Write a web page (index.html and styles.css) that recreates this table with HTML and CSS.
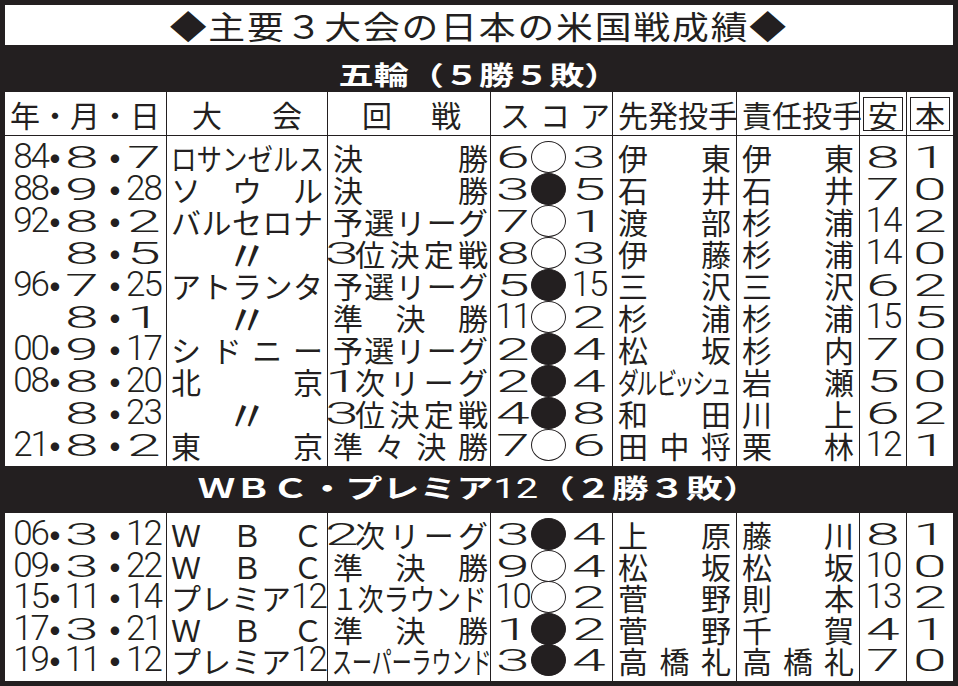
FILE: index.html
```html
<!DOCTYPE html>
<html lang="ja">
<head>
<meta charset="utf-8">
<title>主要３大会の日本の米国戦成績</title>
<link rel="stylesheet" href="styles.css">
</head>
<body>
<div class="sheet">
  <div class="title"><span class="title-text">◆主要３大会の日本の米国戦成績◆</span></div>
  <div class="band band1"><span class="band-text">五輪（５勝５敗）</span></div>
  <div class="table t1">
    <div class="row head">
      <div class="c hdate"><span>年</span><span class="hdt">・</span><span>月</span><span class="hdt">・</span><span>日</span></div>
      <div class="c sp h-tour"><span>大</span><span>会</span></div>
      <div class="c sp h-round"><span>回</span><span>戦</span></div>
      <div class="c sp h-score"><span>ス</span><span>コ</span><span>ア</span></div>
      <div class="c sp p"><span>先</span><span>発</span><span>投</span><span>手</span></div>
      <div class="c sp p"><span>責</span><span>任</span><span>投</span><span>手</span></div>
      <div class="c num"><span class="box">安</span></div>
      <div class="c num"><span class="box">本</span></div>
    </div>
    <div class="body">
      <div class="row">
        <div class="c date"><span class="yr n">84</span><span class="dt"><span class="dot">・</span></span><span class="mo"><span class="w">8</span></span><span class="dt"><span class="dot">・</span></span><span class="dy"><span class="w">7</span></span></div>
        <div class="c t"><span class="sq sq-la">ロサンゼルス</span></div>
        <div class="c sp r"><span>決</span><span>勝</span></div>
        <div class="c score"><span class="sl"><span class="w">6</span></span><span class="ball" role="img" aria-label="勝"></span><span class="sr"><span class="w">3</span></span></div>
        <div class="c sp p"><span>伊</span><span>東</span></div>
        <div class="c sp p"><span>伊</span><span>東</span></div>
        <div class="c num"><span class="w">8</span></div>
        <div class="c num"><span class="w">1</span></div>
      </div>
      <div class="row">
        <div class="c date"><span class="yr n">88</span><span class="dt"><span class="dot">・</span></span><span class="mo"><span class="w">9</span></span><span class="dt"><span class="dot">・</span></span><span class="dy"><span class="n">28</span></span></div>
        <div class="c sp t"><span>ソ</span><span>ウ</span><span>ル</span></div>
        <div class="c sp r"><span>決</span><span>勝</span></div>
        <div class="c score"><span class="sl"><span class="w">3</span></span><span class="ball lose" role="img" aria-label="敗"></span><span class="sr"><span class="w">5</span></span></div>
        <div class="c sp p"><span>石</span><span>井</span></div>
        <div class="c sp p"><span>石</span><span>井</span></div>
        <div class="c num"><span class="w">7</span></div>
        <div class="c num"><span class="w">0</span></div>
      </div>
      <div class="row">
        <div class="c date"><span class="yr n">92</span><span class="dt"><span class="dot">・</span></span><span class="mo"><span class="w">8</span></span><span class="dt"><span class="dot">・</span></span><span class="dy"><span class="w">2</span></span></div>
        <div class="c sp t"><span>バ</span><span>ル</span><span>セ</span><span>ロ</span><span>ナ</span></div>
        <div class="c sp r"><span>予</span><span>選</span><span>リ</span><span>ー</span><span>グ</span></div>
        <div class="c score"><span class="sl"><span class="w">7</span></span><span class="ball" role="img" aria-label="勝"></span><span class="sr"><span class="w">1</span></span></div>
        <div class="c sp p"><span>渡</span><span>部</span></div>
        <div class="c sp p"><span>杉</span><span>浦</span></div>
        <div class="c num"><span class="n">14</span></div>
        <div class="c num"><span class="w">2</span></div>
      </div>
      <div class="row">
        <div class="c date"><span class="yr"></span><span class="dt"></span><span class="mo"><span class="w">8</span></span><span class="dt"><span class="dot">・</span></span><span class="dy"><span class="w">5</span></span></div>
        <div class="c ditto-cell"><span class="ditto">〃</span></div>
        <div class="c sp r"><span class="w">3</span><span>位</span><span>決</span><span>定</span><span>戦</span></div>
        <div class="c score"><span class="sl"><span class="w">8</span></span><span class="ball" role="img" aria-label="勝"></span><span class="sr"><span class="w">3</span></span></div>
        <div class="c sp p"><span>伊</span><span>藤</span></div>
        <div class="c sp p"><span>杉</span><span>浦</span></div>
        <div class="c num"><span class="n">14</span></div>
        <div class="c num"><span class="w">0</span></div>
      </div>
      <div class="row">
        <div class="c date"><span class="yr n">96</span><span class="dt"><span class="dot">・</span></span><span class="mo"><span class="w">7</span></span><span class="dt"><span class="dot">・</span></span><span class="dy"><span class="n">25</span></span></div>
        <div class="c sp t"><span>ア</span><span>ト</span><span>ラ</span><span>ン</span><span>タ</span></div>
        <div class="c sp r"><span>予</span><span>選</span><span>リ</span><span>ー</span><span>グ</span></div>
        <div class="c score"><span class="sl"><span class="w">5</span></span><span class="ball lose" role="img" aria-label="敗"></span><span class="sr"><span class="n">15</span></span></div>
        <div class="c sp p"><span>三</span><span>沢</span></div>
        <div class="c sp p"><span>三</span><span>沢</span></div>
        <div class="c num"><span class="w">6</span></div>
        <div class="c num"><span class="w">2</span></div>
      </div>
      <div class="row">
        <div class="c date"><span class="yr"></span><span class="dt"></span><span class="mo"><span class="w">8</span></span><span class="dt"><span class="dot">・</span></span><span class="dy"><span class="w">1</span></span></div>
        <div class="c ditto-cell"><span class="ditto">〃</span></div>
        <div class="c sp r r3"><span>準</span><span>決</span><span>勝</span></div>
        <div class="c score"><span class="sl"><span class="n">11</span></span><span class="ball" role="img" aria-label="勝"></span><span class="sr"><span class="w">2</span></span></div>
        <div class="c sp p"><span>杉</span><span>浦</span></div>
        <div class="c sp p"><span>杉</span><span>浦</span></div>
        <div class="c num"><span class="n">15</span></div>
        <div class="c num"><span class="w">5</span></div>
      </div>
      <div class="row">
        <div class="c date"><span class="yr n">00</span><span class="dt"><span class="dot">・</span></span><span class="mo"><span class="w">9</span></span><span class="dt"><span class="dot">・</span></span><span class="dy"><span class="n">17</span></span></div>
        <div class="c sp t"><span>シ</span><span>ド</span><span>ニ</span><span>ー</span></div>
        <div class="c sp r"><span>予</span><span>選</span><span>リ</span><span>ー</span><span>グ</span></div>
        <div class="c score"><span class="sl"><span class="w">2</span></span><span class="ball lose" role="img" aria-label="敗"></span><span class="sr"><span class="w">4</span></span></div>
        <div class="c sp p"><span>松</span><span>坂</span></div>
        <div class="c sp p"><span>杉</span><span>内</span></div>
        <div class="c num"><span class="w">7</span></div>
        <div class="c num"><span class="w">0</span></div>
      </div>
      <div class="row">
        <div class="c date"><span class="yr n">08</span><span class="dt"><span class="dot">・</span></span><span class="mo"><span class="w">8</span></span><span class="dt"><span class="dot">・</span></span><span class="dy"><span class="n">20</span></span></div>
        <div class="c sp t"><span>北</span><span>京</span></div>
        <div class="c sp r"><span class="w">1</span><span>次</span><span>リ</span><span>ー</span><span>グ</span></div>
        <div class="c score"><span class="sl"><span class="w">2</span></span><span class="ball lose" role="img" aria-label="敗"></span><span class="sr"><span class="w">4</span></span></div>
        <div class="c p pl"><span class="sq sq-darvish">ダルビッシュ</span></div>
        <div class="c sp p"><span>岩</span><span>瀬</span></div>
        <div class="c num"><span class="w">5</span></div>
        <div class="c num"><span class="w">0</span></div>
      </div>
      <div class="row">
        <div class="c date"><span class="yr"></span><span class="dt"></span><span class="mo"><span class="w">8</span></span><span class="dt"><span class="dot">・</span></span><span class="dy"><span class="n">23</span></span></div>
        <div class="c ditto-cell"><span class="ditto">〃</span></div>
        <div class="c sp r"><span class="w">3</span><span>位</span><span>決</span><span>定</span><span>戦</span></div>
        <div class="c score"><span class="sl"><span class="w">4</span></span><span class="ball lose" role="img" aria-label="敗"></span><span class="sr"><span class="w">8</span></span></div>
        <div class="c sp p"><span>和</span><span>田</span></div>
        <div class="c sp p"><span>川</span><span>上</span></div>
        <div class="c num"><span class="w">6</span></div>
        <div class="c num"><span class="w">2</span></div>
      </div>
      <div class="row">
        <div class="c date"><span class="yr n">21</span><span class="dt"><span class="dot">・</span></span><span class="mo"><span class="w">8</span></span><span class="dt"><span class="dot">・</span></span><span class="dy"><span class="w">2</span></span></div>
        <div class="c sp t"><span>東</span><span>京</span></div>
        <div class="c sp r"><span>準</span><span>々</span><span>決</span><span>勝</span></div>
        <div class="c score"><span class="sl"><span class="w">7</span></span><span class="ball" role="img" aria-label="勝"></span><span class="sr"><span class="w">6</span></span></div>
        <div class="c sp p"><span>田</span><span>中</span><span>将</span></div>
        <div class="c sp p"><span>栗</span><span>林</span></div>
        <div class="c num"><span class="n">12</span></div>
        <div class="c num"><span class="w">1</span></div>
      </div>
    </div>
  </div>
  <div class="band band2"><span class="band-text">ＷＢＣ・プレミア<span class="bn">12</span>（２勝３敗）</span></div>
  <div class="table t2">
    <div class="body">
      <div class="row">
        <div class="c date"><span class="yr n">06</span><span class="dt"><span class="dot">・</span></span><span class="mo"><span class="w">3</span></span><span class="dt"><span class="dot">・</span></span><span class="dy"><span class="n">12</span></span></div>
        <div class="c sp t"><span>Ｗ</span><span>Ｂ</span><span>Ｃ</span></div>
        <div class="c sp r"><span class="w">2</span><span>次</span><span>リ</span><span>ー</span><span>グ</span></div>
        <div class="c score"><span class="sl"><span class="w">3</span></span><span class="ball lose" role="img" aria-label="敗"></span><span class="sr"><span class="w">4</span></span></div>
        <div class="c sp p"><span>上</span><span>原</span></div>
        <div class="c sp p"><span>藤</span><span>川</span></div>
        <div class="c num"><span class="w">8</span></div>
        <div class="c num"><span class="w">1</span></div>
      </div>
      <div class="row">
        <div class="c date"><span class="yr n">09</span><span class="dt"><span class="dot">・</span></span><span class="mo"><span class="w">3</span></span><span class="dt"><span class="dot">・</span></span><span class="dy"><span class="n">22</span></span></div>
        <div class="c sp t"><span>Ｗ</span><span>Ｂ</span><span>Ｃ</span></div>
        <div class="c sp r r3"><span>準</span><span>決</span><span>勝</span></div>
        <div class="c score"><span class="sl"><span class="w">9</span></span><span class="ball" role="img" aria-label="勝"></span><span class="sr"><span class="w">4</span></span></div>
        <div class="c sp p"><span>松</span><span>坂</span></div>
        <div class="c sp p"><span>松</span><span>坂</span></div>
        <div class="c num"><span class="n">10</span></div>
        <div class="c num"><span class="w">0</span></div>
      </div>
      <div class="row">
        <div class="c date"><span class="yr n">15</span><span class="dt"><span class="dot">・</span></span><span class="mo"><span class="n">11</span></span><span class="dt"><span class="dot">・</span></span><span class="dy"><span class="n">14</span></span></div>
        <div class="c sp t"><span>プ</span><span>レ</span><span>ミ</span><span>ア</span><span class="n">12</span></div>
        <div class="c r rl"><span class="sq sq-r1">１次ラウンド</span></div>
        <div class="c score"><span class="sl"><span class="n">10</span></span><span class="ball" role="img" aria-label="勝"></span><span class="sr"><span class="w">2</span></span></div>
        <div class="c sp p"><span>菅</span><span>野</span></div>
        <div class="c sp p"><span>則</span><span>本</span></div>
        <div class="c num"><span class="n">13</span></div>
        <div class="c num"><span class="w">2</span></div>
      </div>
      <div class="row">
        <div class="c date"><span class="yr n">17</span><span class="dt"><span class="dot">・</span></span><span class="mo"><span class="w">3</span></span><span class="dt"><span class="dot">・</span></span><span class="dy"><span class="n">21</span></span></div>
        <div class="c sp t"><span>Ｗ</span><span>Ｂ</span><span>Ｃ</span></div>
        <div class="c sp r r3"><span>準</span><span>決</span><span>勝</span></div>
        <div class="c score"><span class="sl"><span class="w">1</span></span><span class="ball lose" role="img" aria-label="敗"></span><span class="sr"><span class="w">2</span></span></div>
        <div class="c sp p"><span>菅</span><span>野</span></div>
        <div class="c sp p"><span>千</span><span>賀</span></div>
        <div class="c num"><span class="w">4</span></div>
        <div class="c num"><span class="w">1</span></div>
      </div>
      <div class="row">
        <div class="c date"><span class="yr n">19</span><span class="dt"><span class="dot">・</span></span><span class="mo"><span class="n">11</span></span><span class="dt"><span class="dot">・</span></span><span class="dy"><span class="n">12</span></span></div>
        <div class="c sp t"><span>プ</span><span>レ</span><span>ミ</span><span>ア</span><span class="n">12</span></div>
        <div class="c r rl"><span class="sq sq-super">スーパーラウンド</span></div>
        <div class="c score"><span class="sl"><span class="w">3</span></span><span class="ball lose" role="img" aria-label="敗"></span><span class="sr"><span class="w">4</span></span></div>
        <div class="c sp p"><span>高</span><span>橋</span><span>礼</span></div>
        <div class="c sp p"><span>高</span><span>橋</span><span>礼</span></div>
        <div class="c num"><span class="w">7</span></div>
        <div class="c num"><span class="w">0</span></div>
      </div>
    </div>
  </div>
</div>
</body>
</html>
```

FILE: styles.css
```css
* { box-sizing: border-box; margin: 0; padding: 0; }
html, body { width: 958px; height: 686px; overflow: hidden; background: #231f20; }
body { font-family: "Noto Sans CJK JP", "Noto Sans CJK SC", sans-serif; color: #231f20; }

.sheet { width: 958px; height: 686px; padding: 5px; display: flex; flex-direction: column; }

.title { height: 40px; background: #fff; display: flex; justify-content: center; align-items: center; }
.title-text { display: inline-block; font-size: 32px; line-height: 40px; letter-spacing: 1.6px; transform: scaleX(1.15); white-space: nowrap; }

.band { height: 47px; display: flex; justify-content: center; align-items: center; color: #fff; font-weight: 700; }
.band1 { padding-top: 10px; }
.band2 { padding-bottom: 3px; }
.band-text { display: inline-block; font-size: 26px; line-height: 30px; transform: scaleX(1.35); white-space: nowrap; }
.band2 .band-text { transform: scaleX(1.42); }
.bn { font-family: Roboto, "Liberation Sans", sans-serif; font-weight: 400; font-size: 28px; }

.table { background: #fff; }
.row { display: grid; grid-template-columns: 161px 161px 163px 122px 124px 123px 47px 47px; height: 32px; }
.head { height: 44px; border-bottom: 1px solid #231f20; }
.t1 .body .row:first-child { height: 37px; }
.t1 .body .row:first-child .c { padding-top: 5px; }
.t1 .body .row:last-child { height: 37px; }
.t1 .body .row:last-child .c { padding-bottom: 5px; }
.t2 .row { height: 31.5px; }
.t2 .body .row:first-child { height: 36.5px; }
.t2 .body .row:first-child .c { padding-top: 5px; }
.t2 .body .row:last-child { height: 37px; }
.t2 .body .row:last-child .c { padding-bottom: 5.5px; }

.c { display: flex; align-items: center; font-size: 30px; line-height: 32px; white-space: nowrap; min-width: 0; }
.c + .c { border-left: 1px solid #231f20; }

/* digits */
.w { display: inline-block; font-family: Roboto, "Liberation Sans", sans-serif; font-weight: 300; font-size: 32px; line-height: 32px; transform: scaleX(1.9); }
.n { font-family: Roboto, "Liberation Sans", sans-serif; font-weight: 300; font-size: 35px; line-height: 32px; letter-spacing: -2px; }

/* header */
.hdate { justify-content: space-between; padding: 0 10px 0 5px; }
.hdt { font-size: 30px; }
.h-tour { padding: 0 25px 0 25px; }
.h-round { padding: 0 29px 0 34px; }
.h-score { padding: 0 2px 0 9px; }
.box { display: flex; justify-content: center; align-items: center; width: 40px; height: 34px; border: 1.5px solid #231f20; font-size: 30px; line-height: 30px; }

/* body cells */
.date { display: grid; grid-template-columns: 45px 10px 44px 22px 35px; align-items: center; }
.yr { text-align: right; padding-right: 2px; }
.dt { display: flex; justify-content: center; line-height: 32px; }
.dot { display: inline-block; transform: scale(1.33); }
.mo, .dy { display: flex; justify-content: center; }

.sp { justify-content: space-between; }
.t { padding: 0 4px; }
.r { padding: 0 2px 0 5px; }
.r3 { padding: 0 2px 0 5px; }
.p { padding: 0 5px 0 5px; }
.pl { padding-left: 5px; }
.rl { padding-left: 4px; }

.sq { display: inline-block; transform-origin: left center; }
.sq-la { transform: scaleX(0.85); }
.sq-darvish { font-feature-settings: "palt"; transform: scaleX(0.7); }
.sq-r1 { transform: scaleX(0.86); }
.sq-super { transform: scaleX(0.665); }

.ditto-cell { justify-content: center; }
.ditto { display: inline-block; font-size: 30px; line-height: 32px; transform: scale(1.45); }

.score { display: grid; grid-template-columns: 37px 35px 1fr; padding-left: 3px; align-items: center; }
.sl, .sr { display: flex; justify-content: center; }
.ball { width: 35px; height: 32px; border: 1.5px solid #231f20; border-radius: 50%; background: #fff; }
.ball.lose { background: #231f20; }

.num { justify-content: center; }
```
